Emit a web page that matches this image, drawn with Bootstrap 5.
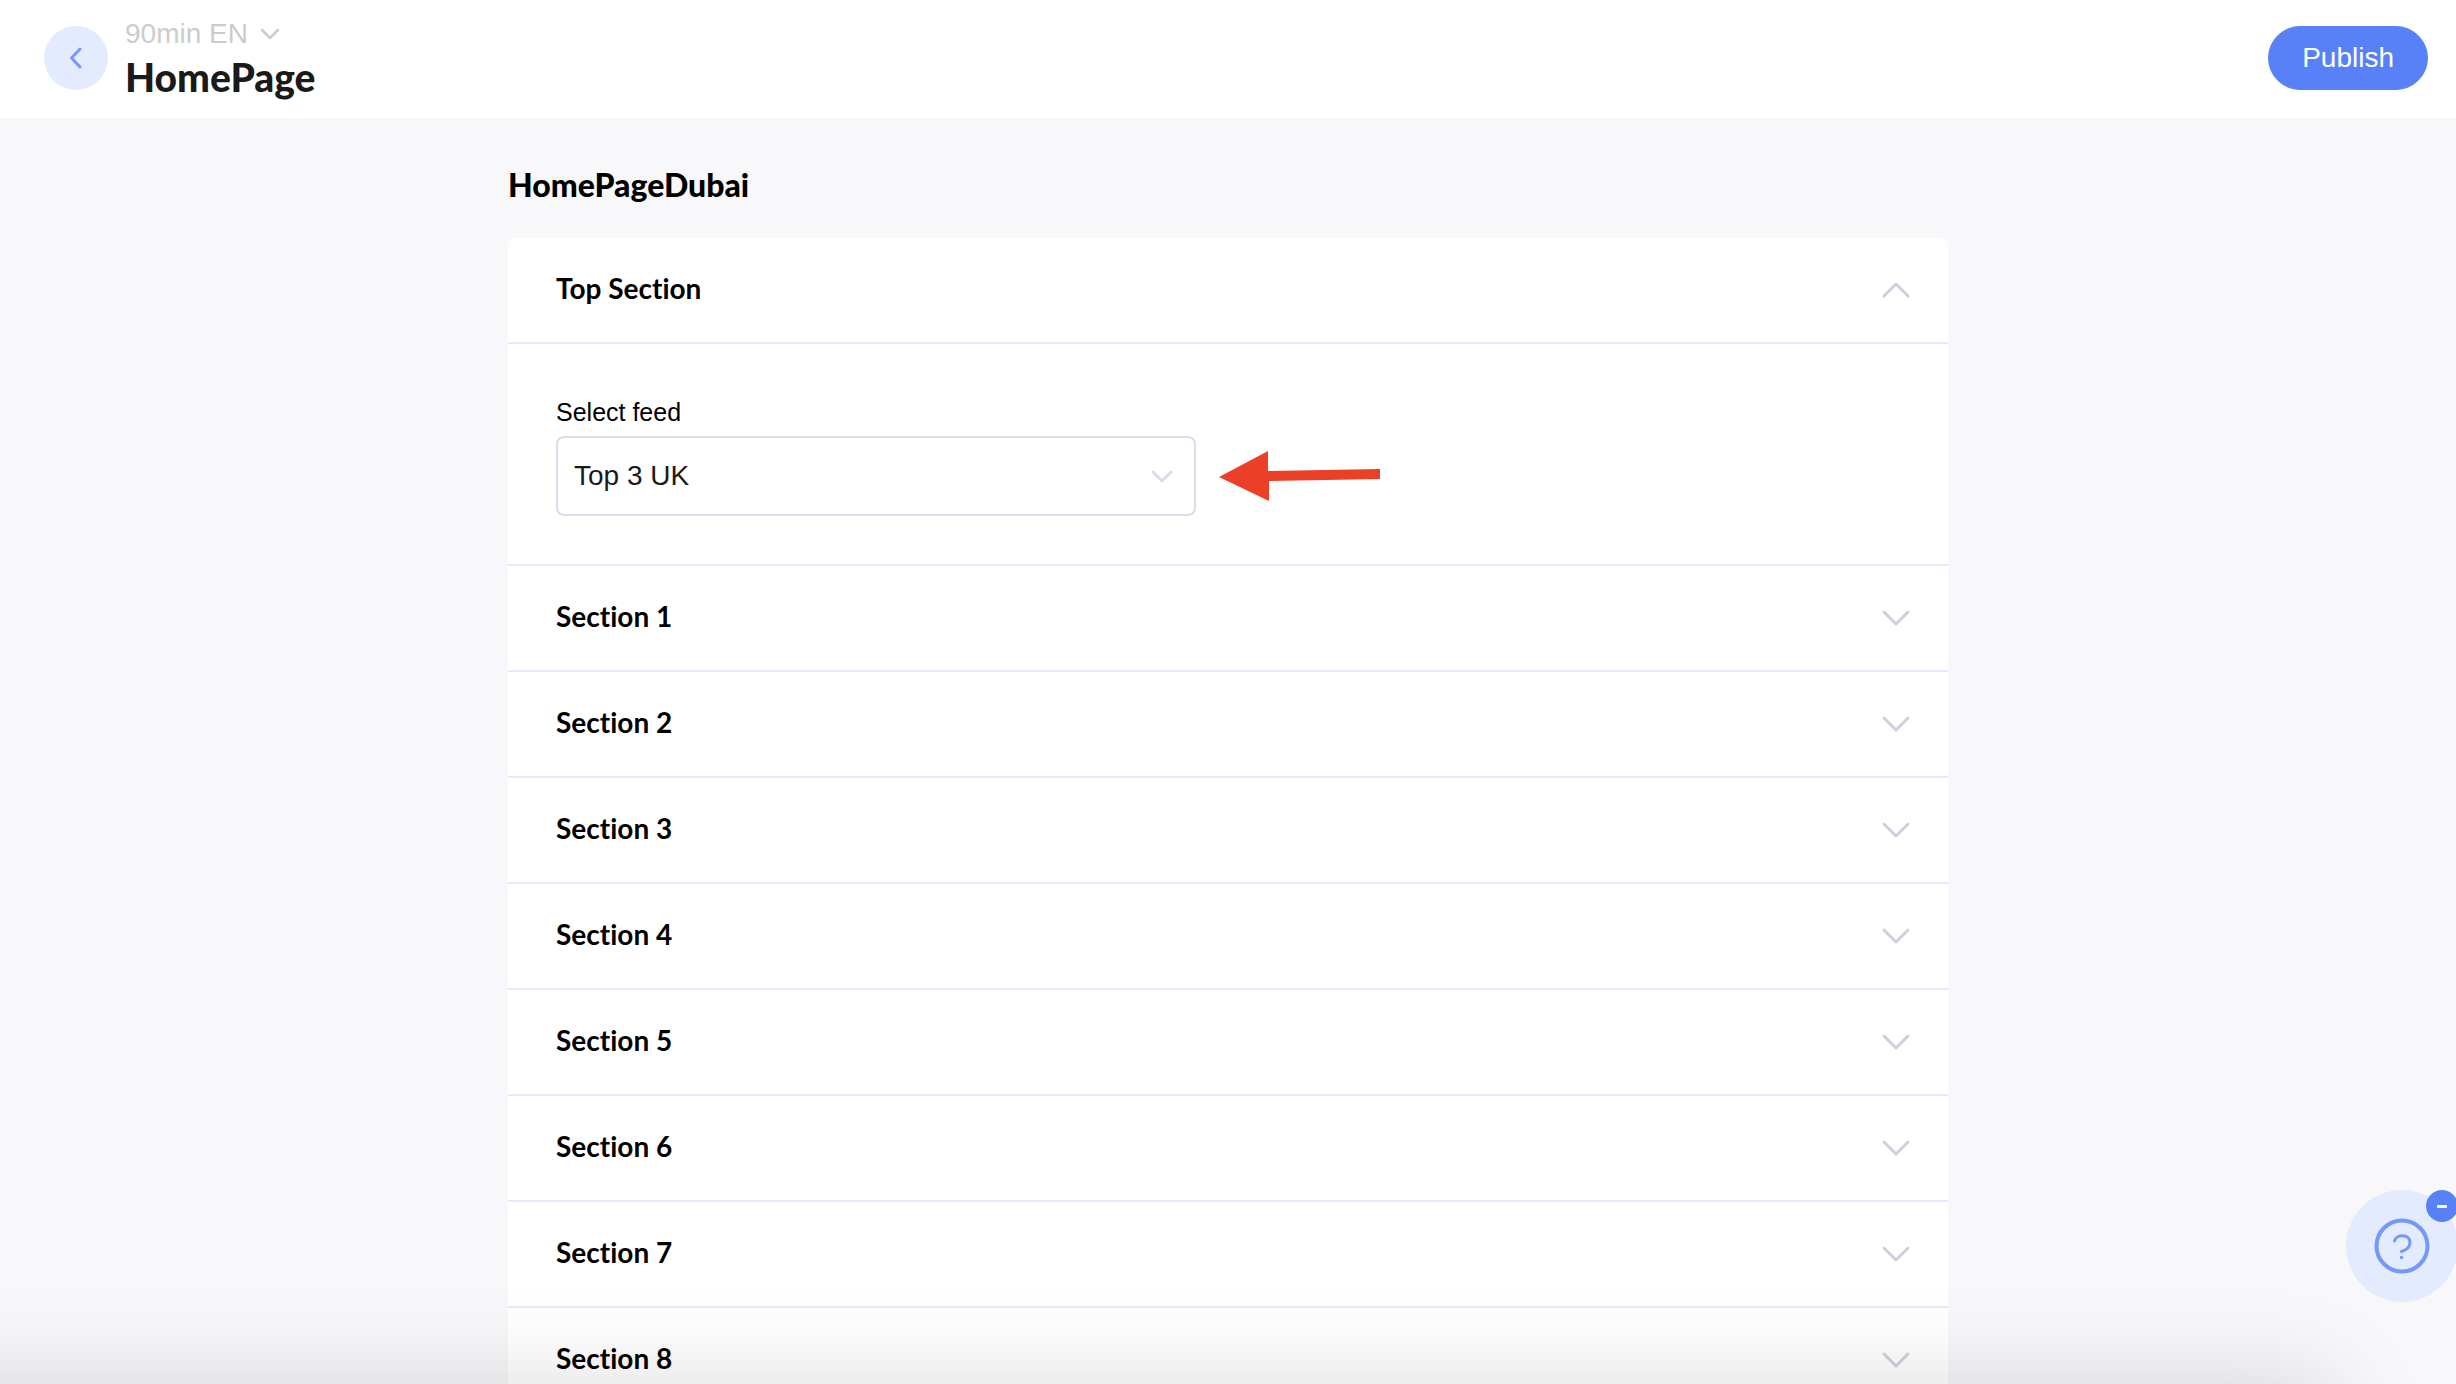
<!DOCTYPE html>
<html lang="en">
<head>
<meta charset="utf-8">
<meta name="viewport" content="width=device-width, initial-scale=1">
<title>HomePage</title>
<link href="https://cdn.jsdelivr.net/npm/bootstrap@5.3.0/dist/css/bootstrap.min.css" rel="stylesheet">
<style>
  body { font-family: "Liberation Sans", Arial, sans-serif; font-size: 28px; line-height: 36px; color: #1a1a1a; background: #f8f8fa; }
  svg { display: block; flex: none; }
  .brand-font { font-family: Lato, "Open Sans", sans-serif; font-variant-ligatures: none; }
  .topbar { height: 118px; padding: 0 28px 0 44px; }
  .back-btn { width: 64px; height: 64px; background: #e4ebfe; color: #7399fb; }
  .topbar .back-btn, .topbar .publish-btn { margin-bottom: 2px; }
  .site-names { margin-left: 17px; padding-top: 4px; }
  .site-switch { color: #ccc; line-height: 32px; gap: 12px; }
  .page-title { font-size: 39px; line-height: 54px; font-weight: 900; margin: 0; }
  .publish-btn { --bs-btn-bg: #5881f7; --bs-btn-border-color: #5881f7; --bs-btn-color: #fff; --bs-btn-hover-bg: #466ff0; --bs-btn-hover-color: #fff; --bs-btn-font-size: 28px; --bs-btn-padding-x: 33px; height: 64px; }
  .scroll-area { scrollbar-width: none; }
  .scroll-area::-webkit-scrollbar { display: none; }
  .page-col { max-width: 1440px; padding-top: 49px; }
  .feed-title { font-size: 32px; line-height: 36px; font-weight: 900; color: #000; margin: 0 0 35px; }
  .accordion { --bs-accordion-border-width: 0; --bs-accordion-border-radius: 8px; --bs-accordion-inner-border-radius: 8px; --bs-accordion-btn-padding-x: 48px; --bs-accordion-btn-padding-y: 0; }
  .accordion-item { border-bottom: 2px solid #e4ebfe; }
  .accordion-button, .accordion-button:not(.collapsed) { height: 104px; padding-right: 37px; padding-bottom: 3px; font-size: 28px; font-weight: 700; color: #000; background: #fff; box-shadow: none; }
  .accordion-button::after { display: none; }
  .accordion-button svg { color: #d1cee0; margin-top: 3px; }
  .accordion-button[aria-expanded="true"] svg { transform: rotate(180deg); }
  .accordion-body { padding: 50px 48px 48px; border-top: 2px solid #e4ebfe; }
  .feed-label { font-size: 25px; line-height: 36px; color: #000; margin-bottom: 6px; }
  .feed-row { gap: 23px; }
  .feed-box { width: 640px; max-width: 100%; }
  .feed-box .form-select { height: 80px; padding: 0 60px 0 16px; font-size: 28px; color: #1a1a1a; border: 2px solid #dddbe9; border-radius: 8px; background-image: none; }
  .feed-box svg { right: 23px; top: 33px; color: #dddbe9; pointer-events: none; }
  .help-dock { right: -2px; bottom: 82px; z-index: 20; }
  .help-btn { width: 112px; height: 112px; background: #e4ebfe; color: #7399fb; }
  .help-min { width: 32px; height: 32px; top: 0; right: 0; background: #5881f7; color: #fff; }
  .bottom-shade { left: -120px; right: 124px; top: 100%; height: 200px; box-shadow: 0 0 100px rgba(0,0,0,.15); pointer-events: none; }
</style>
</head>
<body class="vh-100 d-flex flex-column overflow-hidden">
<header class="topbar bg-white d-flex align-items-center flex-shrink-0">
  <button class="back-btn btn border-0 rounded-circle p-0 d-flex align-items-center justify-content-center" type="button" aria-label="Back">
    <svg width="14" height="22" viewBox="0 0 14 22" fill="none" stroke="currentColor" stroke-width="3" stroke-linecap="round" stroke-linejoin="round"><path d="M11 2 2.500 11l8.500 9"/></svg>
  </button>
  <div class="site-names">
    <a class="site-switch d-flex align-items-center text-decoration-none" href="#">90min EN
      <svg width="20" height="12" viewBox="0 0 20 12" fill="none" stroke="currentColor" stroke-width="2.500" stroke-linecap="round" stroke-linejoin="round"><path d="m2 2 8 8 8-8"/></svg>
    </a>
    <h1 class="page-title brand-font">HomePage</h1>
  </div>
  <button class="publish-btn btn rounded-pill ms-auto" type="button">Publish</button>
</header>

<main class="scroll-area flex-grow-1 overflow-auto">
  <div class="page-col container-fluid px-0">
    <h2 class="feed-title brand-font">HomePageDubai</h2>
    <div class="accordion" id="sections">
      <section class="accordion-item">
        <h3 class="accordion-header"><button class="accordion-button brand-font justify-content-between" type="button" data-bs-toggle="collapse" data-bs-target="#s0" aria-expanded="true">Top Section
          <svg width="30" height="18" viewBox="0 0 30 18" fill="none" stroke="currentColor" stroke-width="3" stroke-linecap="round" stroke-linejoin="round"><path d="m3 3 12 12L27 3"/></svg></button></h3>
        <div class="accordion-collapse collapse show" id="s0">
          <div class="accordion-body">
            <label class="feed-label d-block" for="feed">Select feed</label>
            <div class="feed-row d-flex align-items-center">
              <div class="feed-box position-relative">
                <select class="form-select" id="feed"><option>Top 3 UK</option></select>
                <svg class="position-absolute" width="22" height="14" viewBox="0 0 22 14" fill="none" stroke="currentColor" stroke-width="3" stroke-linecap="round" stroke-linejoin="round"><path d="m2 3 9 9 9-9"/></svg>
              </div>
              <svg width="161" height="50" viewBox="0 0 161 50" fill="#eb4027" aria-hidden="true"><path d="M0 26 49 0v20l112-2v10L50 30v20z"/></svg>
            </div>
          </div>
        </div>
      </section>
    </div>
  </div>
</main>

<div class="bottom-shade position-fixed"></div>
<div class="help-dock position-fixed">
  <button class="help-btn btn border-0 rounded-circle p-0 d-flex align-items-center justify-content-center" type="button" aria-label="Help">
    <svg width="56" height="56" viewBox="0 0 56 56" fill="none" stroke="currentColor" stroke-linecap="round"><circle cx="28" cy="28" r="25.500" stroke-width="4"/><path d="M20.500 23c1.500-7 15.500-7.500 15.500 1.500 0 5-4 7.500-8.500 9" stroke-width="3"/><circle cx="27.500" cy="39.500" r="1.700" fill="currentColor" stroke="none"/></svg>
  </button>
  <button class="help-min btn border-0 rounded-circle p-0 position-absolute d-flex align-items-center justify-content-center" type="button" aria-label="Minimize">
    <svg width="10" height="3" viewBox="0 0 10 3" fill="currentColor"><rect width="10" height="3" rx="1"/></svg>
  </button>
</div>

<script src="https://cdn.jsdelivr.net/npm/bootstrap@5.3.0/dist/js/bootstrap.bundle.min.js"></script>
<script>
  const list = document.getElementById('sections');
  const chevron = list.querySelector('.accordion-button svg').outerHTML;
  for (let n = 1; n <= 8; n++) {
    list.insertAdjacentHTML('beforeend', `<section class="accordion-item">
      <h3 class="accordion-header"><button class="accordion-button collapsed brand-font justify-content-between" type="button" data-bs-toggle="collapse" data-bs-target="#s${n}" aria-expanded="false">Section ${n}${chevron}</button></h3>
      <div class="accordion-collapse collapse" id="s${n}"><div class="accordion-body"></div></div>
    </section>`);
  }
</script>
</body>
</html>
